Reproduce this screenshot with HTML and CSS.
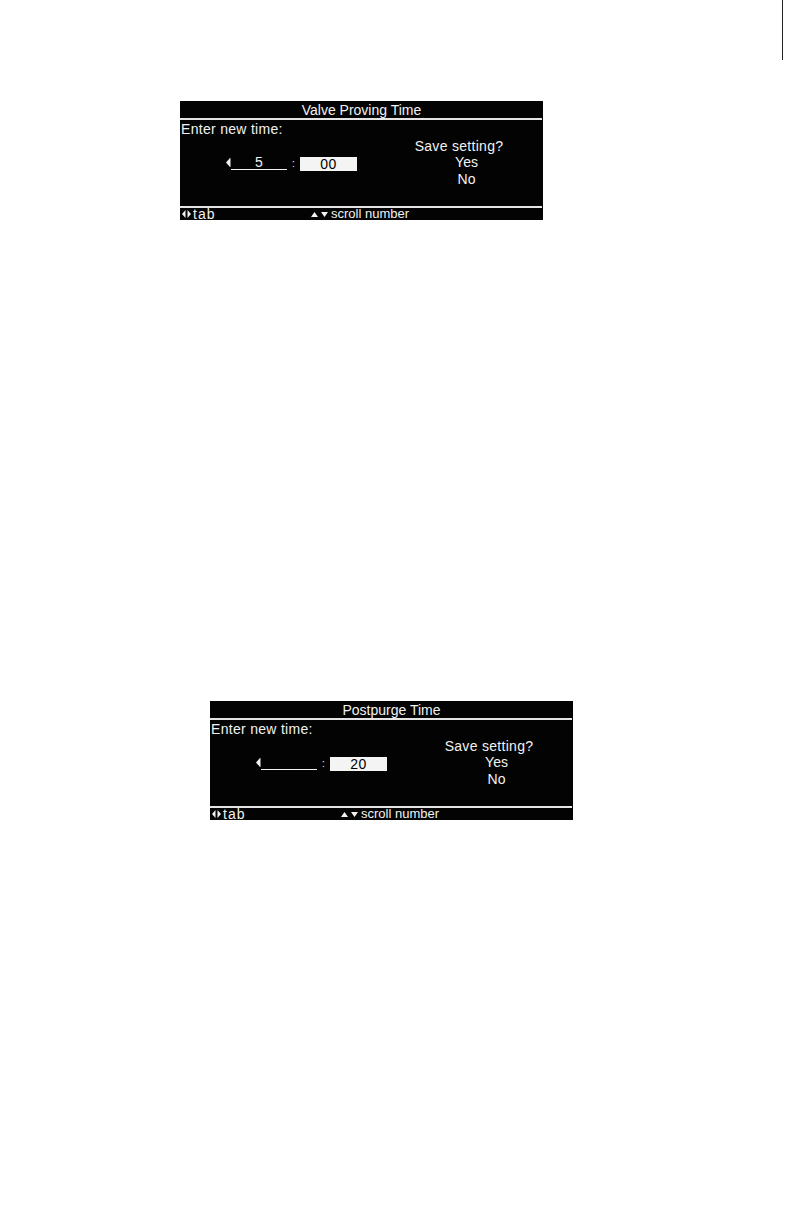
FILE: index.html
```html
<!DOCTYPE html>
<html>
<head>
<meta charset="utf-8">
<link rel="stylesheet" href="styles.css">
</head>
<body>
<div class="page">
  <div class="edge"></div>

  <div class="panel panel-one">
    <div class="title">Valve Proving Time</div>
    <div class="rule"></div>
    <div class="body">
      <div class="prompt">Enter new time:</div>
      <div class="save">Save setting?</div>
      <div class="field">
        <svg class="caret" width="5" height="9" viewBox="0 0 5 9"><path d="M4 0 L0 4.5 L4 9 Z" fill="#f2f2f2"/><rect x="4" y="0" width="1" height="9" fill="#777"/></svg>
        <span class="slot">5</span>
        <span class="colon">:</span>
        <span class="box">00</span>
      </div>
      <div class="opt">Yes</div>
      <div class="opt opt-last">No</div>
    </div>
    <div class="rule"></div>
    <div class="footer">
      <div class="hint">
        <svg class="tri" width="9" height="8" viewBox="0 0 9 8"><path d="M3.5 0 L0 4 L3.5 8 Z M5.5 0 L9 4 L5.5 8 Z" fill="#f2f2f2"/></svg>
        <span class="tab">tab</span>
      </div>
      <div class="hint">
        <svg class="tri" width="18" height="5" viewBox="0 0 18 5"><path d="M0 5 L3.5 0 L7 5 Z M10 0 L17 0 L13.5 5 Z" fill="#f2f2f2"/></svg>
        <span>scroll number</span>
      </div>
    </div>
  </div>

  <div class="panel panel-two">
    <div class="title">Postpurge Time</div>
    <div class="rule"></div>
    <div class="body">
      <div class="prompt">Enter new time:</div>
      <div class="save">Save setting?</div>
      <div class="field">
        <svg class="caret" width="5" height="9" viewBox="0 0 5 9"><path d="M4 0 L0 4.5 L4 9 Z" fill="#f2f2f2"/><rect x="4" y="0" width="1" height="9" fill="#777"/></svg>
        <span class="slot"></span>
        <span class="colon">:</span>
        <span class="box">20</span>
      </div>
      <div class="opt">Yes</div>
      <div class="opt opt-last">No</div>
    </div>
    <div class="rule"></div>
    <div class="footer">
      <div class="hint">
        <svg class="tri" width="9" height="8" viewBox="0 0 9 8"><path d="M3.5 0 L0 4 L3.5 8 Z M5.5 0 L9 4 L5.5 8 Z" fill="#f2f2f2"/></svg>
        <span class="tab">tab</span>
      </div>
      <div class="hint">
        <svg class="tri" width="18" height="5" viewBox="0 0 18 5"><path d="M0 5 L3.5 0 L7 5 Z M10 0 L17 0 L13.5 5 Z" fill="#f2f2f2"/></svg>
        <span>scroll number</span>
      </div>
    </div>
  </div>
</div>
</body>
</html>
```

FILE: styles.css
```css
html, body {
  margin: 0;
  padding: 0;
  background: #ffffff;
}

.page {
  position: relative;
  width: 792px;
  height: 1224px;
  padding-top: 101px;
  box-sizing: border-box;
  font-family: "Liberation Sans", "DejaVu Sans", sans-serif;
}

.edge {
  position: absolute;
  left: 782px;
  top: 0;
  width: 1px;
  height: 60px;
  background: #222;
}

.panel {
  width: 363px;
  height: 119px;
  background: #030303;
  color: #f2f2f2;
  display: flex;
  flex-direction: column;
}

.panel-one {
  margin-left: 180px;
}

.panel-two {
  margin-left: 210px;
  margin-top: 481px;
}

.title {
  height: 17px;
  line-height: 18px;
  font-size: 14px;
  text-align: center;
}

.rule {
  height: 2px;
  width: 362px;
  background: #e4e4e4;
}

.body {
  height: 86px;
  box-sizing: border-box;
  padding-top: 1px;
  display: grid;
  grid-template-columns: 200px 163px;
  grid-template-rows: 16.5px 16.5px 16.5px 16.5px;
  font-size: 14px;
  line-height: 16.5px;
}

.prompt {
  grid-column: 1;
  grid-row: 1;
  padding-left: 1px;
  letter-spacing: 0.3px;
}

.save {
  grid-column: 2;
  grid-row: 2;
  text-align: center;
  padding-right: 5px;
  letter-spacing: 0.3px;
}

.field {
  grid-column: 1;
  grid-row: 3;
  display: flex;
  align-items: flex-end;
  padding-left: 46px;
  height: 16.5px;
}

.caret {
  margin-bottom: 4px;
}

.slot {
  width: 56px;
  height: 14px;
  line-height: 14px;
  border-bottom: 1px solid #f2f2f2;
  text-align: center;
  margin-bottom: 1px;
}

.colon {
  width: 13px;
  text-align: center;
  font-size: 10px;
  line-height: 12px;
  margin-bottom: 1px;
}

.box {
  width: 57px;
  height: 14px;
  line-height: 15px;
  background: #f4f4f4;
  color: #000;
  text-align: center;
  letter-spacing: 0.5px;
}

.opt {
  grid-column: 2;
  grid-row: 3;
  text-align: center;
  padding-left: 10px;
}

.opt-last {
  grid-row: 4;
  line-height: 17.5px;
}

.footer {
  display: grid;
  grid-template-columns: 131px 1fr;
  height: 12px;
  font-size: 13px;
  line-height: 12px;
}

.hint {
  display: flex;
  align-items: center;
  gap: 2px;
  white-space: nowrap;
}

.hint:first-child {
  padding-left: 2px;
}

.tab {
  font-size: 14px;
  letter-spacing: 1px;
}

.tri {
  flex: none;
}
```
